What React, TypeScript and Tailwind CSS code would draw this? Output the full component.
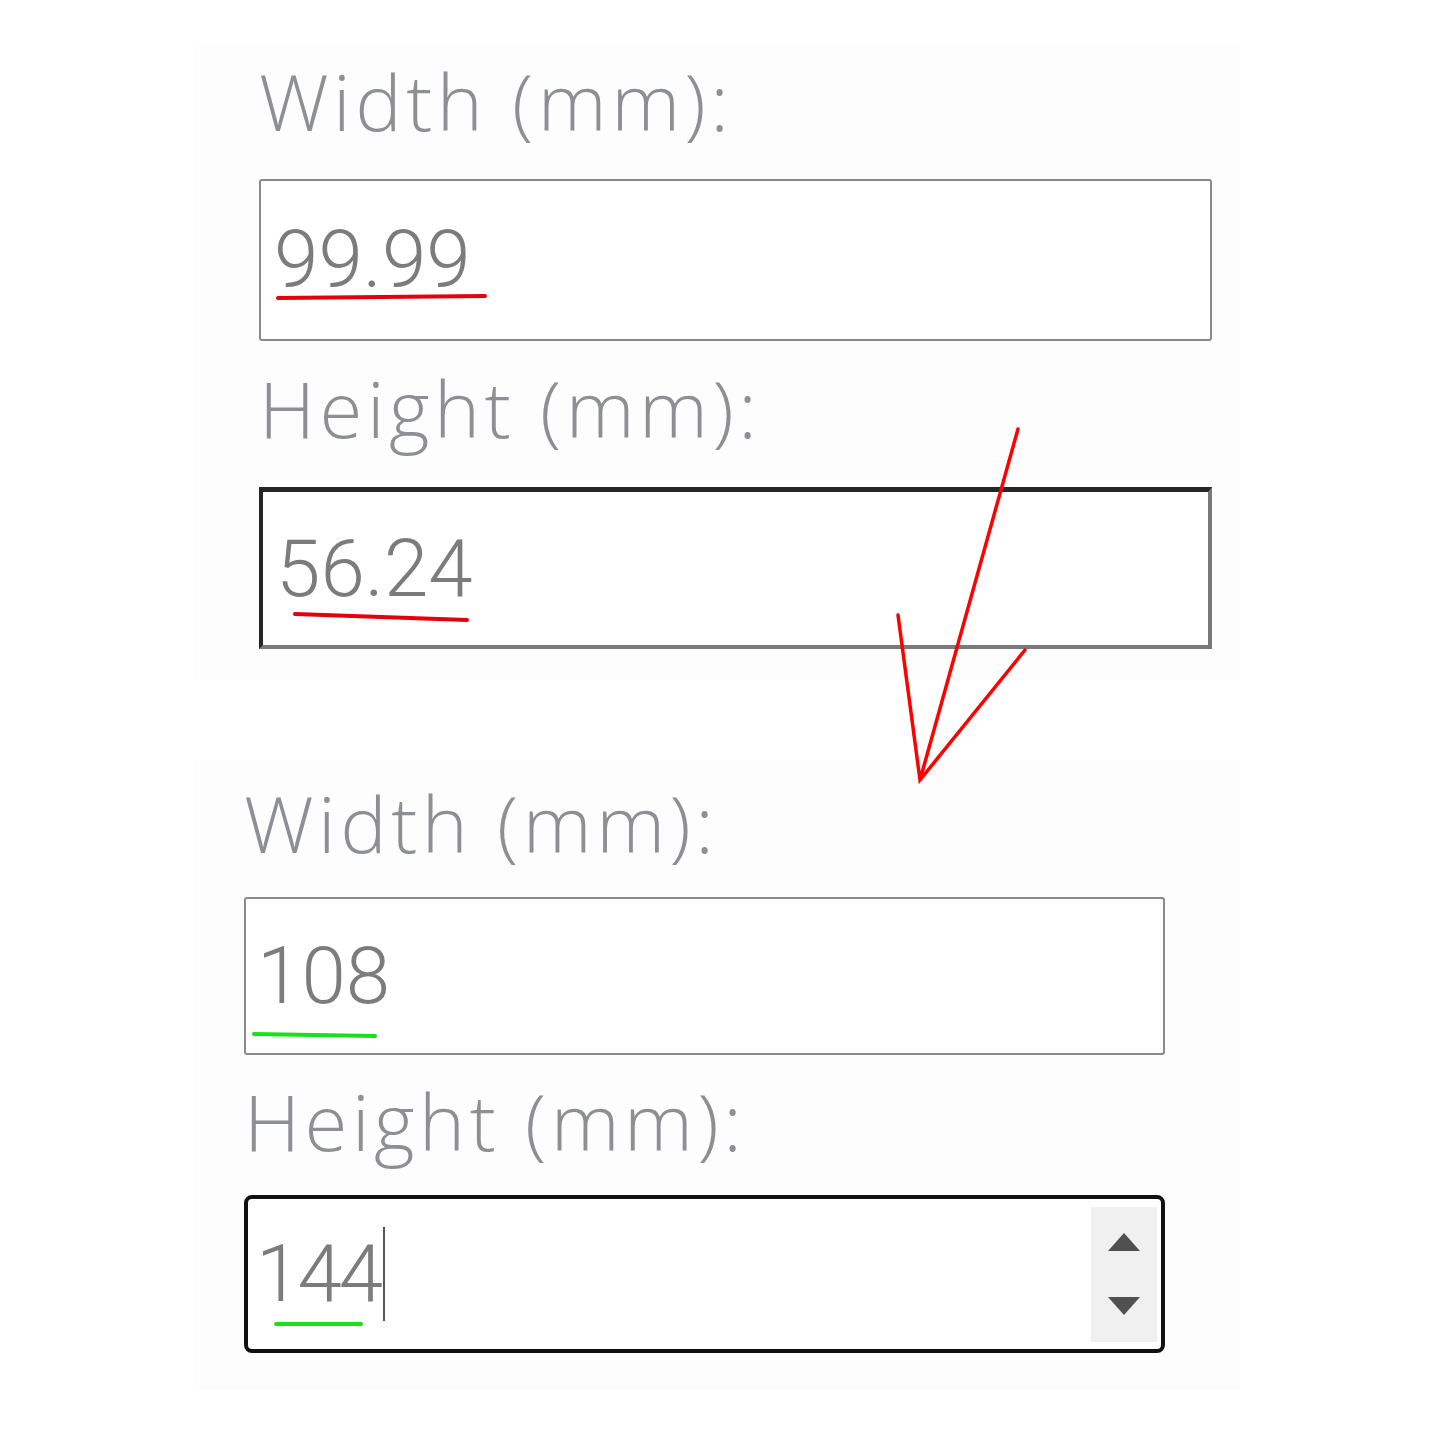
import React from 'react';

const labelCls =
  "block text-[78px] leading-none font-light tracking-[4.5px] text-[#8d8f93] font-['Open_Sans',sans-serif]";
const valueCls =
  "text-[80px] leading-none font-light text-[#7c7c7c] font-['Roboto',sans-serif]";

function Field({ value, className }: { value: string; className: string }) {
  return (
    <input
      readOnly
      value={value}
      className={`${valueCls} ${className} bg-white outline-none px-[13px]`}
    />
  );
}

export default function App() {
  return (
    <div className="relative w-full h-[1440px] bg-white overflow-hidden">
      <div className="pt-[45px] pl-[195px] flex flex-col">
        {/* before */}
        <div className="w-[1045px] h-[635px] bg-[#fdfdfd] pl-[64px] pt-[17px] flex flex-col">
          <label className={labelCls}>Width (mm):</label>
          <Field
            value="99.99"
            className="mt-[39px] w-[953px] h-[162px] border-2 border-[#8a8a8a] rounded-[3px]"
          />
          <label className={`${labelCls} mt-[28px]`}>Height (mm):</label>
          <Field
            value="56.24"
            className="mt-[40px] w-[953px] h-[162px] border-4 border-t-[5px] border-t-[#262626] border-l-[#262626] border-b-[#7a7a7a] border-r-[#7a7a7a]"
          />
        </div>

        {/* after */}
        <div className="mt-[80px] w-[1045px] h-[630px] bg-[#fdfdfd] pl-[49px] pt-[24px] flex flex-col">
          <label className={labelCls}>Width (mm):</label>
          <Field
            value="108"
            className="mt-[35px] w-[921px] h-[158px] border-2 border-[#8a8a8a] rounded-[3px] !px-[11px]"
          />
          <label className={`${labelCls} mt-[27px]`}>Height (mm):</label>
          <div className="mt-[35px] w-[921px] h-[158px] border-4 border-[#111] rounded-[8px] bg-white flex items-center pl-[8px] pr-[4px]">
            <span className={`${valueCls} tracking-[-3px]`}>144</span>
            <span className="w-[2px] h-[94px] bg-[#555] ml-[3px]" />
            <div className="ml-auto w-[66px] h-[135px] bg-[#f0f0f0] flex flex-col items-center justify-center gap-[44px]">
              <svg width="34" height="20" viewBox="0 0 34 20">
                <path d="M17 1 L33 19 L1 19 Z" fill="#505050" />
              </svg>
              <svg width="34" height="20" viewBox="0 0 34 20">
                <path d="M1 1 L33 1 L17 19 Z" fill="#505050" />
              </svg>
            </div>
          </div>
        </div>
      </div>

      {/* annotations */}
      <svg
        className="absolute inset-0 pointer-events-none"
        width="1440"
        height="1440"
        viewBox="0 0 1440 1440"
        fill="none"
        strokeLinecap="round"
      >
        <path d="M278 298 L485 296" stroke="#e3000f" strokeWidth="4" />
        <path d="M295 614 L467 620" stroke="#e3000f" strokeWidth="4" />
        <path d="M1018 429 L920 780 M898 615 L920 780 L1025 650" stroke="#ff0000" strokeWidth="3.5" />
        <path d="M254 1034 L375 1036" stroke="#19e019" strokeWidth="4" />
        <path d="M276 1324 L361 1324" stroke="#19e019" strokeWidth="4" />
      </svg>
    </div>
  );
}
